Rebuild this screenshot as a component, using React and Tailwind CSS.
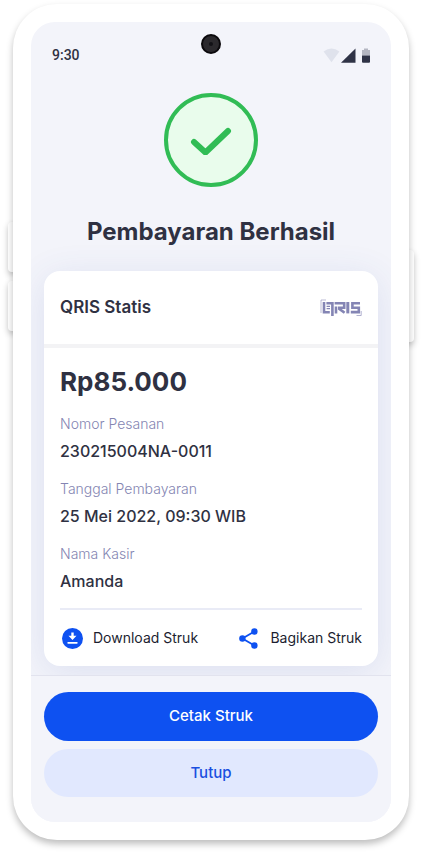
import React from "react";

const details = [
  { label: "Nomor Pesanan", value: "230215004NA-0011" },
  { label: "Tanggal Pembayaran", value: "25 Mei 2022, 09:30 WIB" },
  { label: "Nama Kasir", value: "Amanda" },
];

function StatusIcons() {
  return (
    <svg width="48" height="16" viewBox="0 0 48 16" aria-label="Status perangkat" role="img">
      <path d="M0.6 4.6 Q8.5 -1.4 16.4 4.6 L8.5 15.2 Z" fill="#dfe2ec" />
      <path d="M32.5 1.4 V15.8 H18 Z" fill="#2f3346" />
      <path d="M39 3 h2 V1.4 h4 V3 h2 V8.6 h-8 Z" fill="#b4b6c1" />
      <path d="M39 8.6 h8 v6.2 q0 1 -1 1 h-6 q-1 0 -1 -1 Z" fill="#2f3346" />
    </svg>
  );
}

function QrisLogo() {
  return (
    <svg width="42" height="18" viewBox="0 0 42 18" fill="none" stroke="#8485b4" role="img" aria-label="QRIS">
      <path d="M1 14 V1 H6" strokeWidth="0.8" opacity="0.7" />
      <path d="M41.2 12 V16.5 H36.5" strokeWidth="0.9" opacity="0.7" />
      <path d="M4 3 V13.2 H9.8" strokeWidth="2.6" />
      <path d="M6.4 4.3 H12.4 V17" strokeWidth="2.6" />
      <path d="M6.6 7.3 H10 M6.6 9.7 H10" strokeWidth="1.3" />
      <path d="M14.6 4.3 H24.2 V8.7 H18" strokeWidth="2.6" />
      <path d="M16 7.4 V14.4 M18.6 9.4 L24.6 13.8" strokeWidth="2.6" />
      <path d="M27.8 3 V14.4" strokeWidth="3" />
      <path d="M40 4.3 H32.4 V8.7 H38.8 V13.1 H30.8" strokeWidth="2.6" />
    </svg>
  );
}

function DownloadIcon() {
  return (
    <svg width="21" height="21" viewBox="0 0 21 21" aria-hidden="true">
      <circle cx="10.5" cy="10.5" r="10.5" fill="#0e51f1" />
      <path d="M9.3 4.6 h2.4 v3.2 h2.8 L10.5 12 L6.5 7.8 h2.8 Z" fill="#fff" />
      <path d="M6.2 14.8 H14.8" stroke="#fff" strokeWidth="1.8" strokeLinecap="round" />
    </svg>
  );
}

function ShareIcon() {
  return (
    <svg width="19" height="21" viewBox="0 0 19 21" aria-hidden="true">
      <path d="M15.4 3.4 L3.4 10.5 L15.4 17.6" fill="none" stroke="#0e51f1" strokeWidth="1.8" />
      <g fill="#0e51f1">
        <circle cx="15.4" cy="3.5" r="3.2" />
        <circle cx="3.4" cy="10.5" r="3.2" />
        <circle cx="15.4" cy="17.5" r="3.2" />
      </g>
    </svg>
  );
}

export default function App() {
  return (
    <div className="bg-white px-[13px] pt-1 pb-3 font-['Inter','Open_Sans',sans-serif] text-[#2f3142]">
      <div className="relative mx-auto max-w-[480px]">
        <span className="absolute top-[218px] -left-[5px] h-[50px] w-4 rounded-sm bg-white shadow-[0_3px_6px_rgba(0,0,0,0.22)]" />
        <span className="absolute top-[277px] -left-[5px] h-[50px] w-4 rounded-sm bg-white shadow-[0_3px_6px_rgba(0,0,0,0.22)]" />
        <span className="absolute top-[246px] -right-[5px] h-[92px] w-4 rounded-sm bg-white shadow-[0_3px_6px_rgba(0,0,0,0.22)]" />

        <div className="relative rounded-[44px] bg-white p-[18px] shadow-[0_4px_7px_rgba(0,0,0,0.26)]">
          <main className="relative overflow-hidden rounded-3xl bg-[#f3f4fa]">
            <span className="absolute top-3 left-1/2 flex size-5 -translate-x-1/2 items-center justify-center rounded-full border-2 border-[#0b090c] bg-[#2b292d]">
              <span className="size-1 rounded-full bg-[#121116]" />
            </span>

            <header className="flex items-center justify-between pt-6 pr-5 pl-[21px]">
              <time className="font-['Roboto',sans-serif] text-sm leading-[18px] font-medium">9:30</time>
              <StatusIcons />
            </header>

            <section className="flex flex-col items-center px-[13px] pt-[29px]">
              <div className="flex size-[94px] items-center justify-center rounded-full border-4 border-[#31bc55] bg-[#e9fcec]">
                <svg width="42" height="30" viewBox="0 0 42 30" fill="none" role="img" aria-label="Berhasil">
                  <path d="M4 17 L15.5 27.5 L38 6" stroke="#31bc55" strokeWidth="6" strokeLinecap="round" strokeLinejoin="miter" />
                </svg>
              </div>
              <h1 className="mt-[27px] text-2xl leading-9 font-bold">Pembayaran Berhasil</h1>
            </section>

            <div className="px-[13px] pt-[21px] pb-[9px]">
              <article className="rounded-2xl bg-white shadow-[0_6px_36px_rgba(60,80,170,0.12)]">
                <div className="flex h-[77px] items-center justify-between border-b-4 border-[#f3f3f5] px-4">
                  <h2 className="text-[17px] font-semibold">QRIS Statis</h2>
                  <QrisLogo />
                </div>
                <div className="px-4 pt-4">
                  <p className="text-[26px] leading-9 font-bold">Rp85.000</p>
                  <dl className="mt-3 flex flex-col gap-[11px]">
                    {details.map((d) => (
                      <div key={d.label}>
                        <dt className="text-sm leading-6 font-light text-[#8485b2]">{d.label}</dt>
                        <dd className="text-base leading-[30px] font-medium">{d.value}</dd>
                      </div>
                    ))}
                  </dl>
                  <div className="mt-3 flex items-center justify-between border-t-2 border-[#e9ebf6] py-4 text-sm leading-6 text-[#1c1e30]">
                    <button type="button" className="flex items-center gap-2.5 pl-0.5">
                      <DownloadIcon />
                      Download Struk
                    </button>
                    <button type="button" className="flex items-center gap-3">
                      <ShareIcon />
                      Bagikan Struk
                    </button>
                  </div>
                </div>
              </article>
            </div>

            <footer className="relative flex flex-col gap-2 border-t border-[#e2e3ee] bg-[#f3f4fa] px-[13px] pt-4 pb-[25px]">
              <button type="button" className="h-[49px] rounded-full bg-[#0e51f1] text-[15px] font-medium text-white">
                Cetak Struk
              </button>
              <button type="button" className="h-12 rounded-full bg-[#e1e8fe] text-[15px] font-medium text-[#1a4fe0]">
                Tutup
              </button>
            </footer>
          </main>
        </div>
      </div>
    </div>
  );
}
